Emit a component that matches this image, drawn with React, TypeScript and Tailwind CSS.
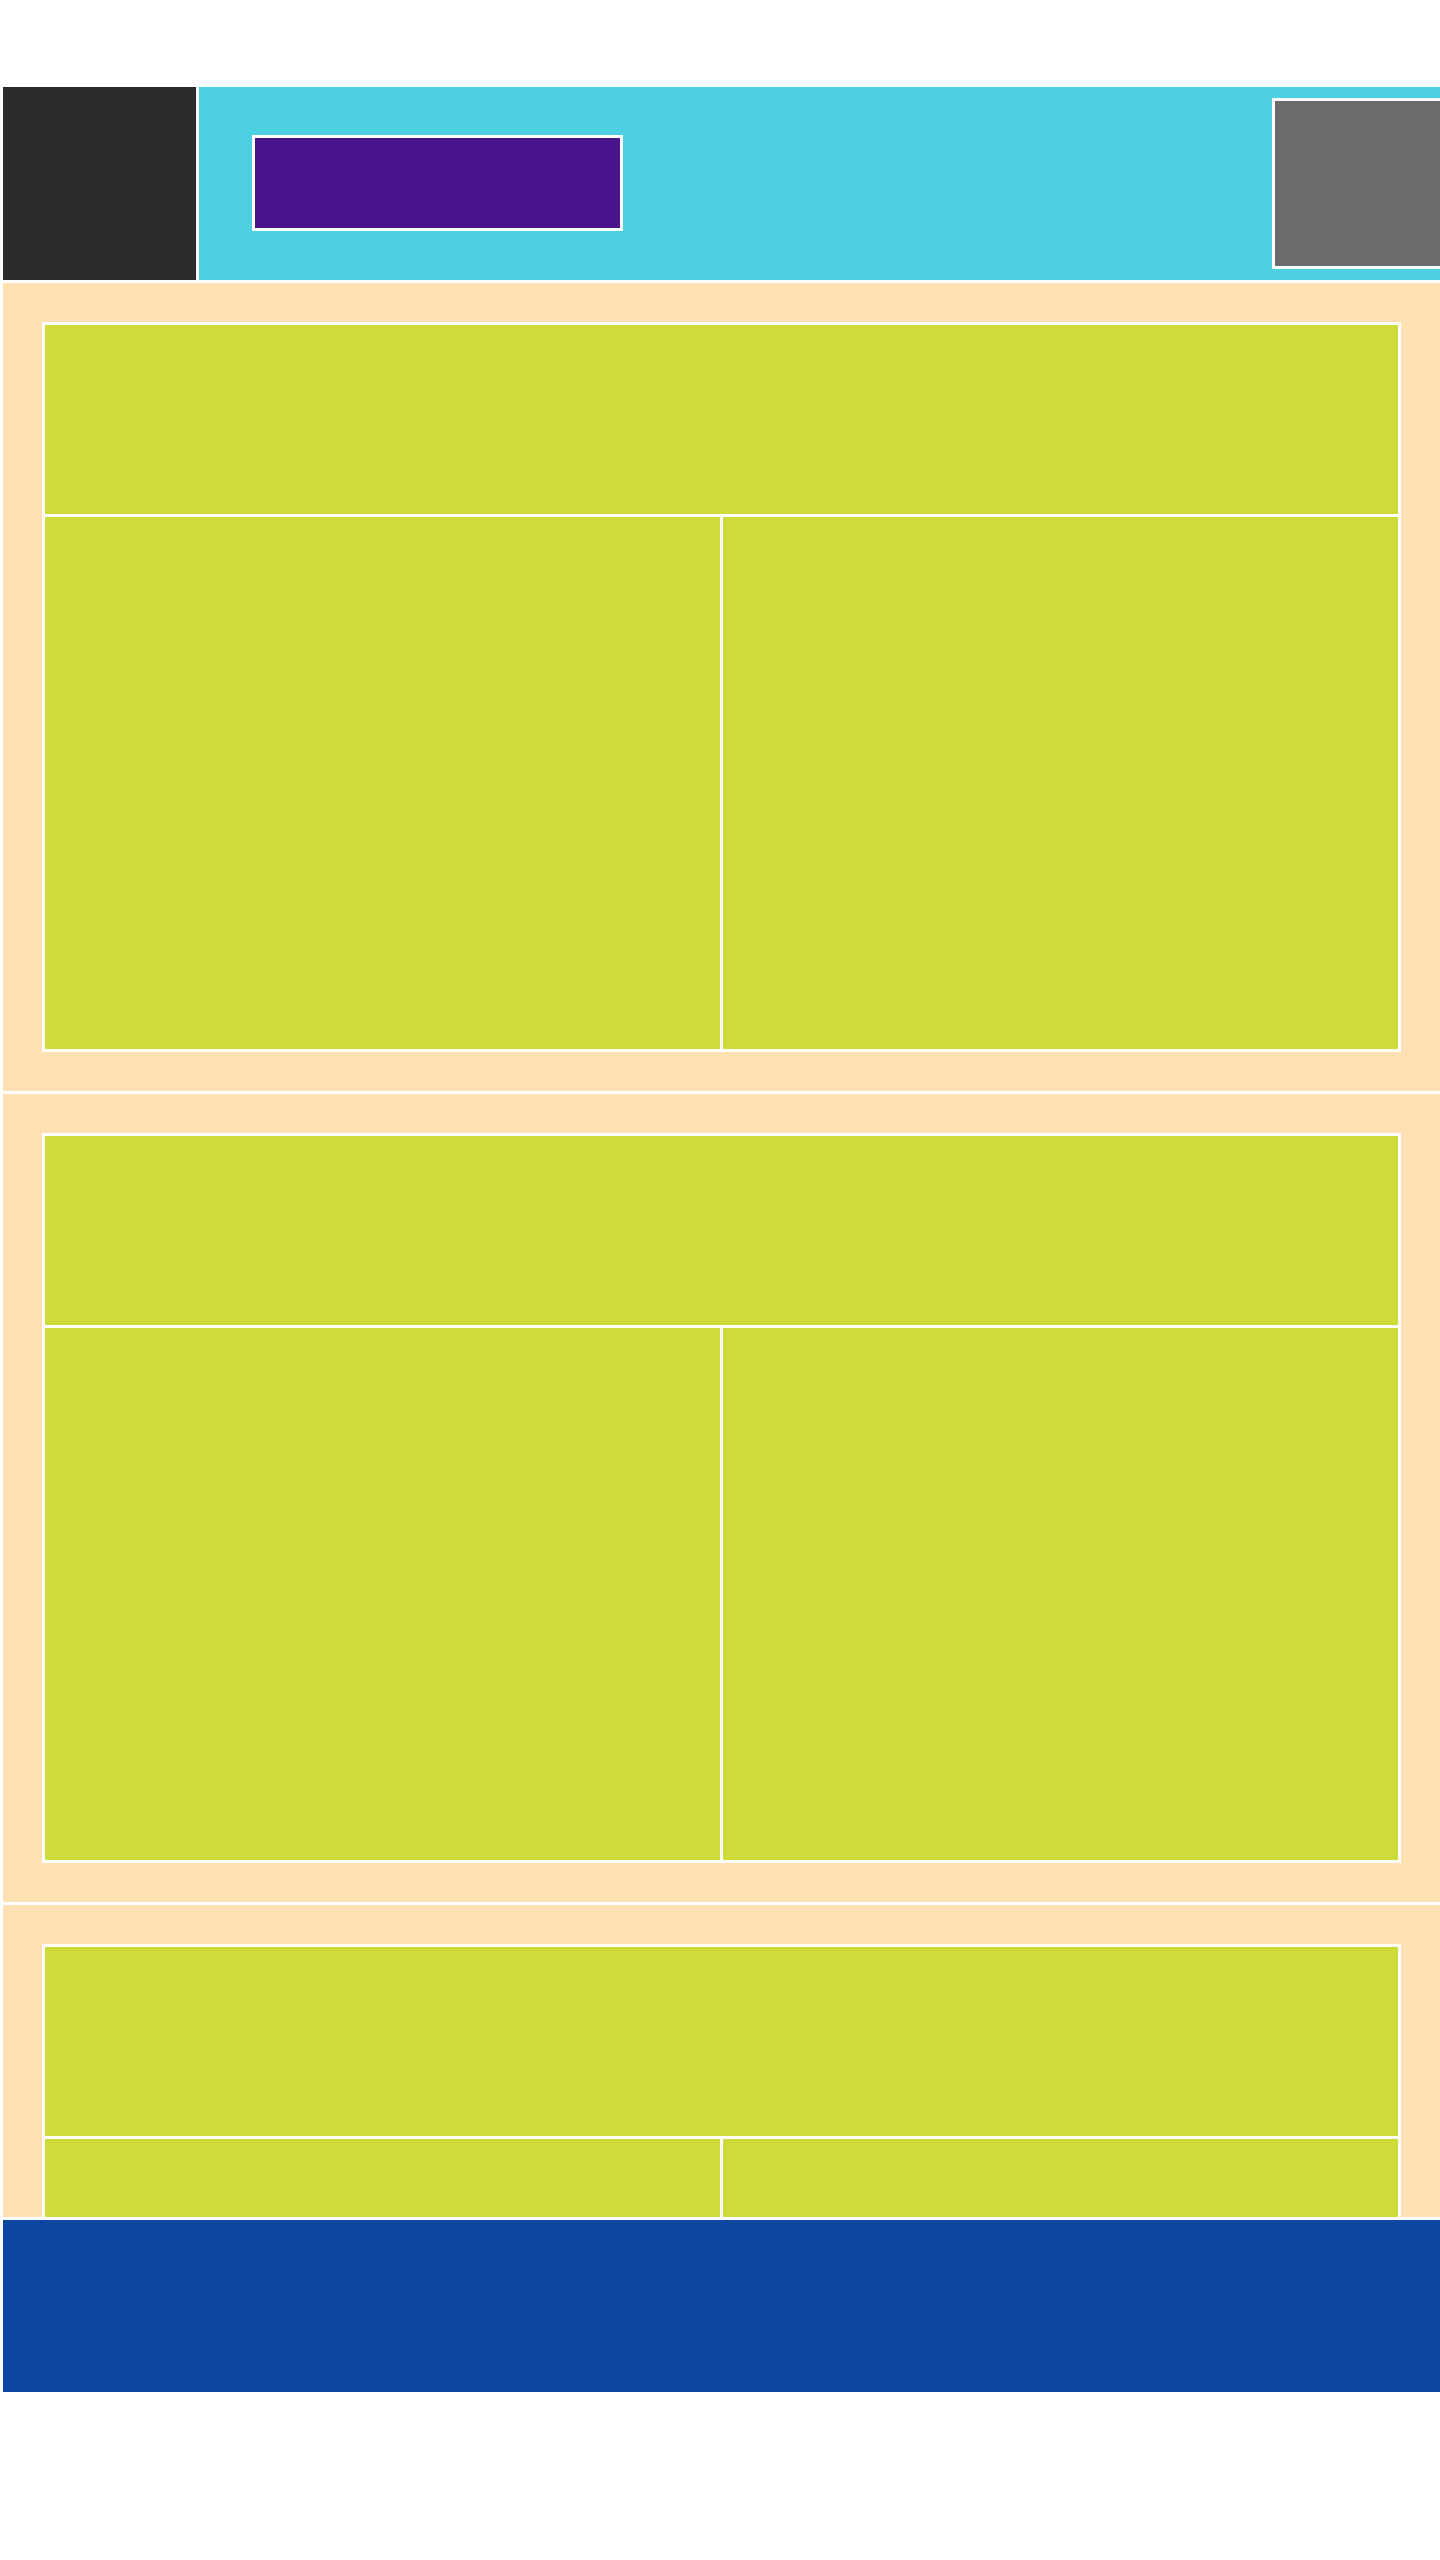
const sections = [0, 1, 2];

function Card() {
    return (
        <div className="border-[3px] border-white bg-[#cddc39] flex flex-col h-[730px]">
            <div className="h-[192px] shrink-0 border-b-[3px] border-white"></div>
            <div className="flex-1 flex">
                <div className="w-[678px] shrink-0 border-r-[3px] border-white"></div>
                <div className="flex-1"></div>
            </div>
        </div>
    );
}

export default function App() {
    return (
        <div className="min-h-screen bg-white pt-[87px] pl-[3px] flex flex-col gap-[3px]">
            {/* Header */}
            <header className="flex h-[193px] gap-[3px]">
                <div className="w-[193px] shrink-0 bg-[#2b2b2b]"></div>
                <div className="flex-1 bg-[#4dd0e1] flex items-start overflow-hidden">
                    <div className="mt-[48px] ml-[53px] w-[371px] h-[96px] border-[3px] border-white bg-[#4a148c]"></div>
                    <div className="ml-auto -mr-[40px] mt-[11px] w-[208px] h-[171px] shrink-0 border-[3px] border-white bg-[#6b6b6b]"></div>
                </div>
            </header>

            {/* Main */}
            <main className="h-[1934px] overflow-hidden flex flex-col gap-[3px]">
                {sections.map((s) => (
                    <section key={s} className="shrink-0 h-[808px] bg-[#ffe0b2] p-[39px]">
                        <Card />
                    </section>
                ))}
            </main>

            {/* Footer */}
            <footer className="h-[172px] bg-[#0d47a1]"></footer>
        </div>
    );
}
